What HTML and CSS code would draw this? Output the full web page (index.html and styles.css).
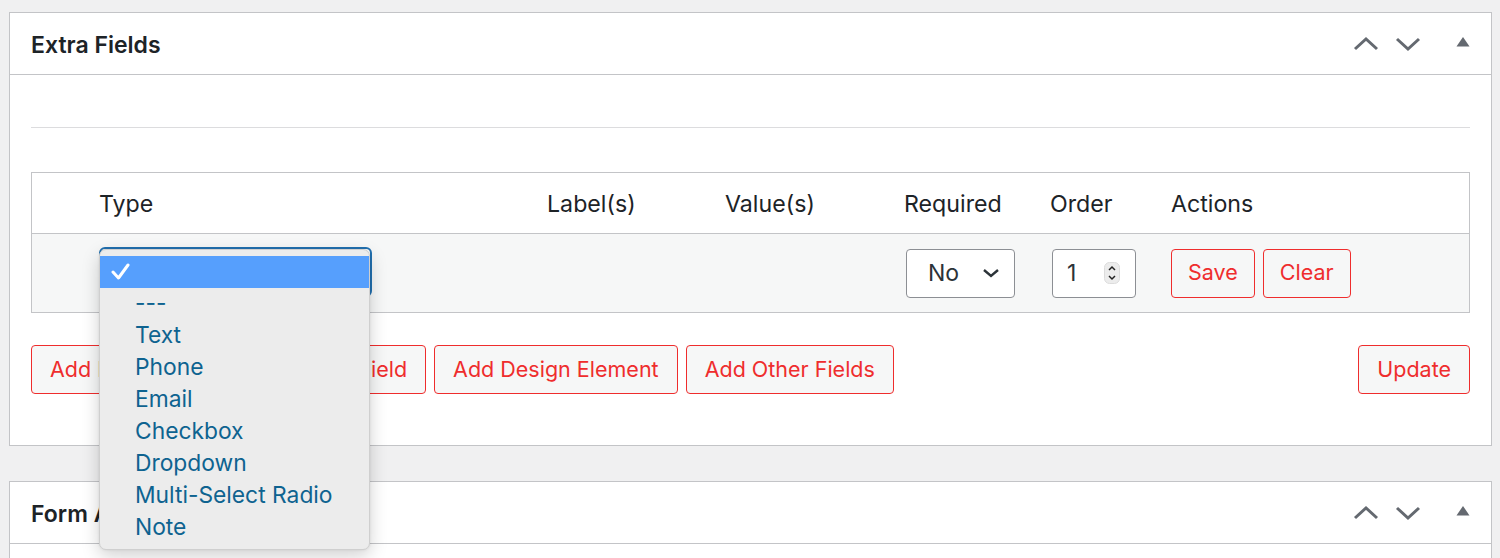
FILE: index.html
```html
<!DOCTYPE html>
<html lang="en">
<head>
<meta charset="utf-8">
<title>Extra Fields</title>
<link rel="stylesheet" href="styles.css">
</head>
<body>
<div class="wrap">
  <section class="postbox">
    <header class="postbox-header">
      <h2>Extra Fields</h2>
      <div class="handle-actions">
        <svg class="h-icon" width="26" height="16" viewBox="0 0 26 16"><polyline points="2,13 13,3 24,13" fill="none" stroke="#646970" stroke-width="3"/></svg>
        <svg class="h-icon" width="26" height="16" viewBox="0 0 26 16"><polyline points="2,3 13,13 24,3" fill="none" stroke="#646970" stroke-width="3"/></svg>
        <svg class="h-tri" width="16" height="12" viewBox="0 0 16 12"><polygon points="1.5,10.5 8,1 14.5,10.5" fill="#646970"/></svg>
      </div>
    </header>
    <div class="inside">
      <hr class="sep">
      <div class="fields-table">
        <div class="trow thead">
          <div class="cell"></div>
          <div class="cell">Type</div>
          <div class="cell">Label(s)</div>
          <div class="cell">Value(s)</div>
          <div class="cell">Required</div>
          <div class="cell">Order</div>
          <div class="cell">Actions</div>
        </div>
        <div class="trow tbody">
          <div class="cell"></div>
          <div class="cell type-cell">
            <div class="type-select"></div>
            <div class="popup">
              <div class="opt selected"><svg width="20" height="18" viewBox="0 0 20 18"><polyline points="2,9 7.5,15 17,2" fill="none" stroke="#fff" stroke-width="3" stroke-linecap="round" stroke-linejoin="round"/></svg></div>
              <div class="opt">---</div>
              <div class="opt">Text</div>
              <div class="opt">Phone</div>
              <div class="opt">Email</div>
              <div class="opt">Checkbox</div>
              <div class="opt">Dropdown</div>
              <div class="opt">Multi-Select Radio</div>
              <div class="opt">Note</div>
            </div>
          </div>
          <div class="cell"></div>
          <div class="cell"></div>
          <div class="cell">
            <div class="req-select">No
              <svg width="18" height="10" viewBox="0 0 18 10"><polyline points="2,2 9,8 16,2" fill="none" stroke="#2c3338" stroke-width="2.4"/></svg>
            </div>
          </div>
          <div class="cell">
            <div class="num-input">1
              <span class="spinner">
                <svg width="16" height="22" viewBox="0 0 16 22"><rect x="0.5" y="0.5" width="15" height="21" rx="5" fill="#ececec" stroke="#dcdcdc"/><polyline points="5,8 8,5 11,8" fill="none" stroke="#222" stroke-width="1.5"/><polyline points="5,14 8,17 11,14" fill="none" stroke="#222" stroke-width="1.5"/></svg>
              </span>
            </div>
          </div>
          <div class="cell actions">
            <button class="btn">Save</button>
            <button class="btn">Clear</button>
          </div>
        </div>
      </div>
      <div class="button-bar">
        <div class="btn-group">
          <button class="btn">Add Basic Field</button>
          <button class="btn">Add Form Field</button>
          <button class="btn">Add Design Element</button>
          <button class="btn">Add Other Fields</button>
        </div>
        <button class="btn">Update</button>
      </div>
    </div>
  </section>

  <section class="postbox second">
    <header class="postbox-header">
      <h2>Form Actions</h2>
      <div class="handle-actions">
        <svg class="h-icon" width="26" height="16" viewBox="0 0 26 16"><polyline points="2,13 13,3 24,13" fill="none" stroke="#646970" stroke-width="3"/></svg>
        <svg class="h-icon" width="26" height="16" viewBox="0 0 26 16"><polyline points="2,3 13,13 24,3" fill="none" stroke="#646970" stroke-width="3"/></svg>
        <svg class="h-tri" width="16" height="12" viewBox="0 0 16 12"><polygon points="1.5,10.5 8,1 14.5,10.5" fill="#646970"/></svg>
      </div>
    </header>
    <div class="inside tall"></div>
  </section>
</div>
</body>
</html>
```

FILE: styles.css
```css
* { box-sizing: border-box; }
html, body {
  margin: 0;
  padding: 0;
  height: 558px;
  overflow: hidden;
  background: #f0f0f1;
  font-family: Inter, "Noto Sans", "Liberation Sans", sans-serif;
  color: #1d2327;
}
.wrap {
  padding: 12px 8px 0 9px;
}
.postbox {
  background: #fff;
  border: 1px solid #c3c4c7;
}
.postbox.second {
  margin-top: 35px;
}
.postbox-header {
  height: 62px;
  border-bottom: 1px solid #c3c4c7;
  display: flex;
  align-items: center;
  justify-content: space-between;
  padding: 0 20px 0 21px;
}
.postbox-header h2 {
  margin: 0;
  padding-top: 2px;
  font-size: 23px;
  font-weight: 600;
  color: #1d2327;
}
.handle-actions {
  display: flex;
  align-items: center;
  gap: 16px;
}
.h-icon { display: block; }
.h-tri { display: block; margin-left: 18px; margin-top: -3px; }

.inside {
  padding: 52px 21px 51px 21px;
}
.inside.tall { height: 200px; }
.sep {
  margin: 0;
  border: 0;
  border-top: 1px solid #dcdcde;
  height: 0;
}
.fields-table {
  margin-top: 44px;
  border: 1px solid #c3c4c7;
}
.trow {
  display: grid;
  grid-template-columns: 67px 448px 178px 179px 146px 121px 1fr;
  align-items: center;
}
.thead {
  height: 61px;
  border-bottom: 1px solid #c3c4c7;
  font-size: 23.2px;
  padding-top: 1px;
}
.tbody {
  height: 78px;
  background: #f6f7f7;
}
.type-cell {
  position: relative;
  height: 100%;
  display: flex;
  align-items: center;
}
.type-select {
  width: 273px;
  height: 50px;
  margin-top: -3px;
  border: 2px solid #2271b1;
  border-radius: 6px;
  background: #fff;
}
.popup {
  position: absolute;
  left: 0;
  top: 15px;
  width: 271px;
  padding: 6px 0 5px;
  background: #ececec;
  border: 1px solid #cfcfcf;
  border-radius: 7px;
  box-shadow: 0 6px 18px rgba(0,0,0,0.18), 0 0 3px rgba(0,0,0,0.08);
  z-index: 5;
}
.opt {
  height: 32px;
  display: flex;
  align-items: center;
  padding-left: 35px;
  padding-bottom: 3px;
  font-size: 22.8px;
  color: #0e6390;
}
.opt.selected {
  background: #569ffd;
  padding-left: 11px;
  padding-bottom: 0;
}
.opt.selected svg { display: block; }

.req-select {
  margin-left: 2px;
  width: 109px;
  height: 49px;
  border: 1px solid #8c8f94;
  border-radius: 4px;
  background: #fff;
  display: flex;
  align-items: center;
  justify-content: space-between;
  padding: 0 14px 0 21px;
  font-size: 23px;
  color: #2c3338;
}
.req-select svg { display: block; }
.num-input {
  margin-left: 2px;
  width: 84px;
  height: 49px;
  border: 1px solid #8c8f94;
  border-radius: 4px;
  background: #fff;
  display: flex;
  align-items: center;
  justify-content: space-between;
  padding: 0 15px 0 14px;
  font-size: 23px;
  color: #2c3338;
}
.spinner svg { display: block; }
.actions {
  display: flex;
  gap: 8px;
}
.btn {
  font-family: inherit;
  font-size: 21.5px;
  color: #ef2d2d;
  background: #f6f7f7;
  border: 1px solid #ef2d2d;
  border-radius: 4px;
  height: 49px;
  padding: 0 18px;
  line-height: 1;
  cursor: pointer;
}
.actions .btn { padding: 0 16px; }
.button-bar {
  margin-top: 32px;
  display: flex;
  justify-content: space-between;
  align-items: center;
}
.btn-group {
  display: flex;
  gap: 8px;
}
```
